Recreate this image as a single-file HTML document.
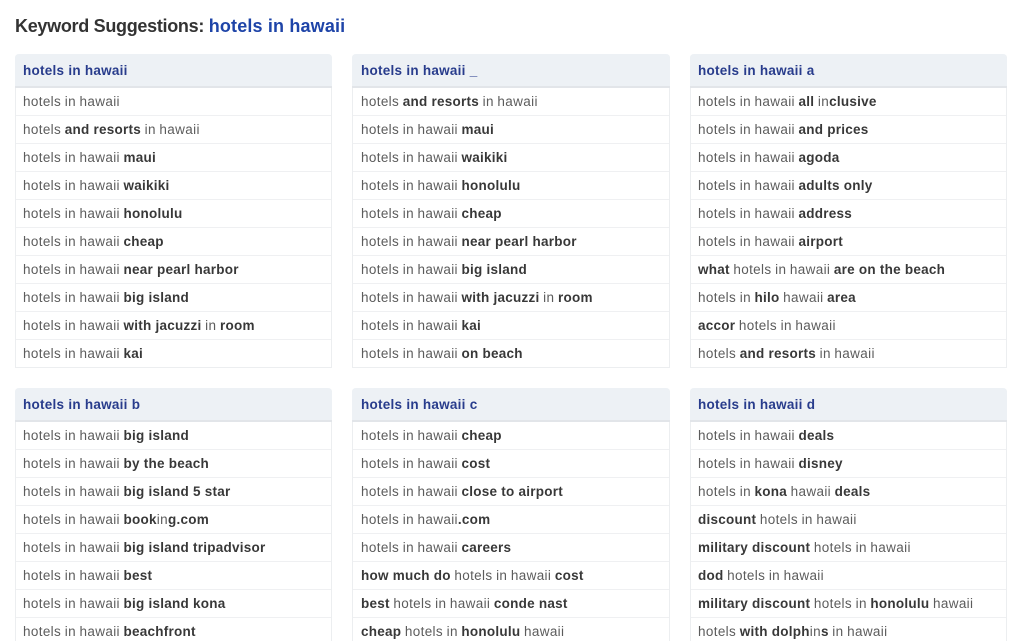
<!DOCTYPE html>
<html><head><meta charset="utf-8">
<style>
html,body{margin:0;padding:0;background:#fff;width:1022px;height:641px;overflow:hidden}
body{font-family:"Liberation Sans",sans-serif;position:relative;color:#555}
h1{position:absolute;left:15px;top:15px;margin:0;font-size:18px;line-height:22px;font-weight:700;color:#333;letter-spacing:-.3px;white-space:nowrap}
h1 span{color:#1e44a8;letter-spacing:.16px}
.p{position:absolute;box-sizing:border-box;width:317px;height:314px;border:1px solid #eceef0;border-top:0;border-radius:4px 4px 0 0}
.m{left:352px;width:318px}
.h{box-sizing:border-box;height:34px;margin:0 -1px;background:#edf1f5;border-bottom:2px solid #e2e5e9;border-radius:4px 4px 0 0;padding-left:8px;font-weight:700;font-size:13.5px;line-height:33px;color:#283c8c;letter-spacing:.26px;white-space:nowrap}
.m .h,.m .r{text-indent:1px}
.r{box-sizing:border-box;height:28px;border-bottom:1px solid #eff0f2;padding-left:7px;font-size:13.5px;line-height:28px;letter-spacing:.35px;word-spacing:-.5px;white-space:nowrap;color:#5c5c5c}
.r:last-child{border-bottom:0;height:27px}
b{color:#383838;letter-spacing:.25px;word-spacing:0}
</style></head><body>
<h1>Keyword Suggestions: <span>hotels in hawaii</span></h1>

<div class="p" style="left:15px;top:54px"><div class="h">hotels in hawaii</div>
<div class="r">hotels in hawaii</div>
<div class="r">hotels <b>and resorts</b> in hawaii</div>
<div class="r">hotels in hawaii <b>maui</b></div>
<div class="r">hotels in hawaii <b>waikiki</b></div>
<div class="r">hotels in hawaii <b>honolulu</b></div>
<div class="r">hotels in hawaii <b>cheap</b></div>
<div class="r">hotels in hawaii <b>near pearl harbor</b></div>
<div class="r">hotels in hawaii <b>big island</b></div>
<div class="r">hotels in hawaii <b>with jacuzzi</b> in <b>room</b></div>
<div class="r">hotels in hawaii <b>kai</b></div>
</div>

<div class="p m" style="top:54px"><div class="h">hotels in hawaii _</div>
<div class="r">hotels <b>and resorts</b> in hawaii</div>
<div class="r">hotels in hawaii <b>maui</b></div>
<div class="r">hotels in hawaii <b>waikiki</b></div>
<div class="r">hotels in hawaii <b>honolulu</b></div>
<div class="r">hotels in hawaii <b>cheap</b></div>
<div class="r">hotels in hawaii <b>near pearl harbor</b></div>
<div class="r">hotels in hawaii <b>big island</b></div>
<div class="r">hotels in hawaii <b>with jacuzzi</b> in <b>room</b></div>
<div class="r">hotels in hawaii <b>kai</b></div>
<div class="r">hotels in hawaii <b>on beach</b></div>
</div>

<div class="p" style="left:690px;top:54px"><div class="h">hotels in hawaii a</div>
<div class="r">hotels in hawaii <b>all</b> in<b>clusive</b></div>
<div class="r">hotels in hawaii <b>and prices</b></div>
<div class="r">hotels in hawaii <b>agoda</b></div>
<div class="r">hotels in hawaii <b>adults only</b></div>
<div class="r">hotels in hawaii <b>address</b></div>
<div class="r">hotels in hawaii <b>airport</b></div>
<div class="r"><b>what</b> hotels in hawaii <b>are on the beach</b></div>
<div class="r">hotels in <b>hilo</b> hawaii <b>area</b></div>
<div class="r"><b>accor</b> hotels in hawaii</div>
<div class="r">hotels <b>and resorts</b> in hawaii</div>
</div>

<div class="p" style="left:15px;top:388px"><div class="h">hotels in hawaii b</div>
<div class="r">hotels in hawaii <b>big island</b></div>
<div class="r">hotels in hawaii <b>by the beach</b></div>
<div class="r">hotels in hawaii <b>big island 5 star</b></div>
<div class="r">hotels in hawaii <b>book</b>in<b>g.com</b></div>
<div class="r">hotels in hawaii <b>big island tripadvisor</b></div>
<div class="r">hotels in hawaii <b>best</b></div>
<div class="r">hotels in hawaii <b>big island kona</b></div>
<div class="r">hotels in hawaii <b>beachfront</b></div>
</div>

<div class="p m" style="top:388px"><div class="h">hotels in hawaii c</div>
<div class="r">hotels in hawaii <b>cheap</b></div>
<div class="r">hotels in hawaii <b>cost</b></div>
<div class="r">hotels in hawaii <b>close to airport</b></div>
<div class="r">hotels in hawaii<b>.com</b></div>
<div class="r">hotels in hawaii <b>careers</b></div>
<div class="r"><b>how much do</b> hotels in hawaii <b>cost</b></div>
<div class="r"><b>best</b> hotels in hawaii <b>conde nast</b></div>
<div class="r"><b>cheap</b> hotels in <b>honolulu</b> hawaii</div>
</div>

<div class="p" style="left:690px;top:388px"><div class="h">hotels in hawaii d</div>
<div class="r">hotels in hawaii <b>deals</b></div>
<div class="r">hotels in hawaii <b>disney</b></div>
<div class="r">hotels in <b>kona</b> hawaii <b>deals</b></div>
<div class="r"><b>discount</b> hotels in hawaii</div>
<div class="r"><b>military discount</b> hotels in hawaii</div>
<div class="r"><b>dod</b> hotels in hawaii</div>
<div class="r"><b>military discount</b> hotels in <b>honolulu</b> hawaii</div>
<div class="r">hotels <b>with dolph</b>in<b>s</b> in hawaii</div>
</div>
</body></html>
